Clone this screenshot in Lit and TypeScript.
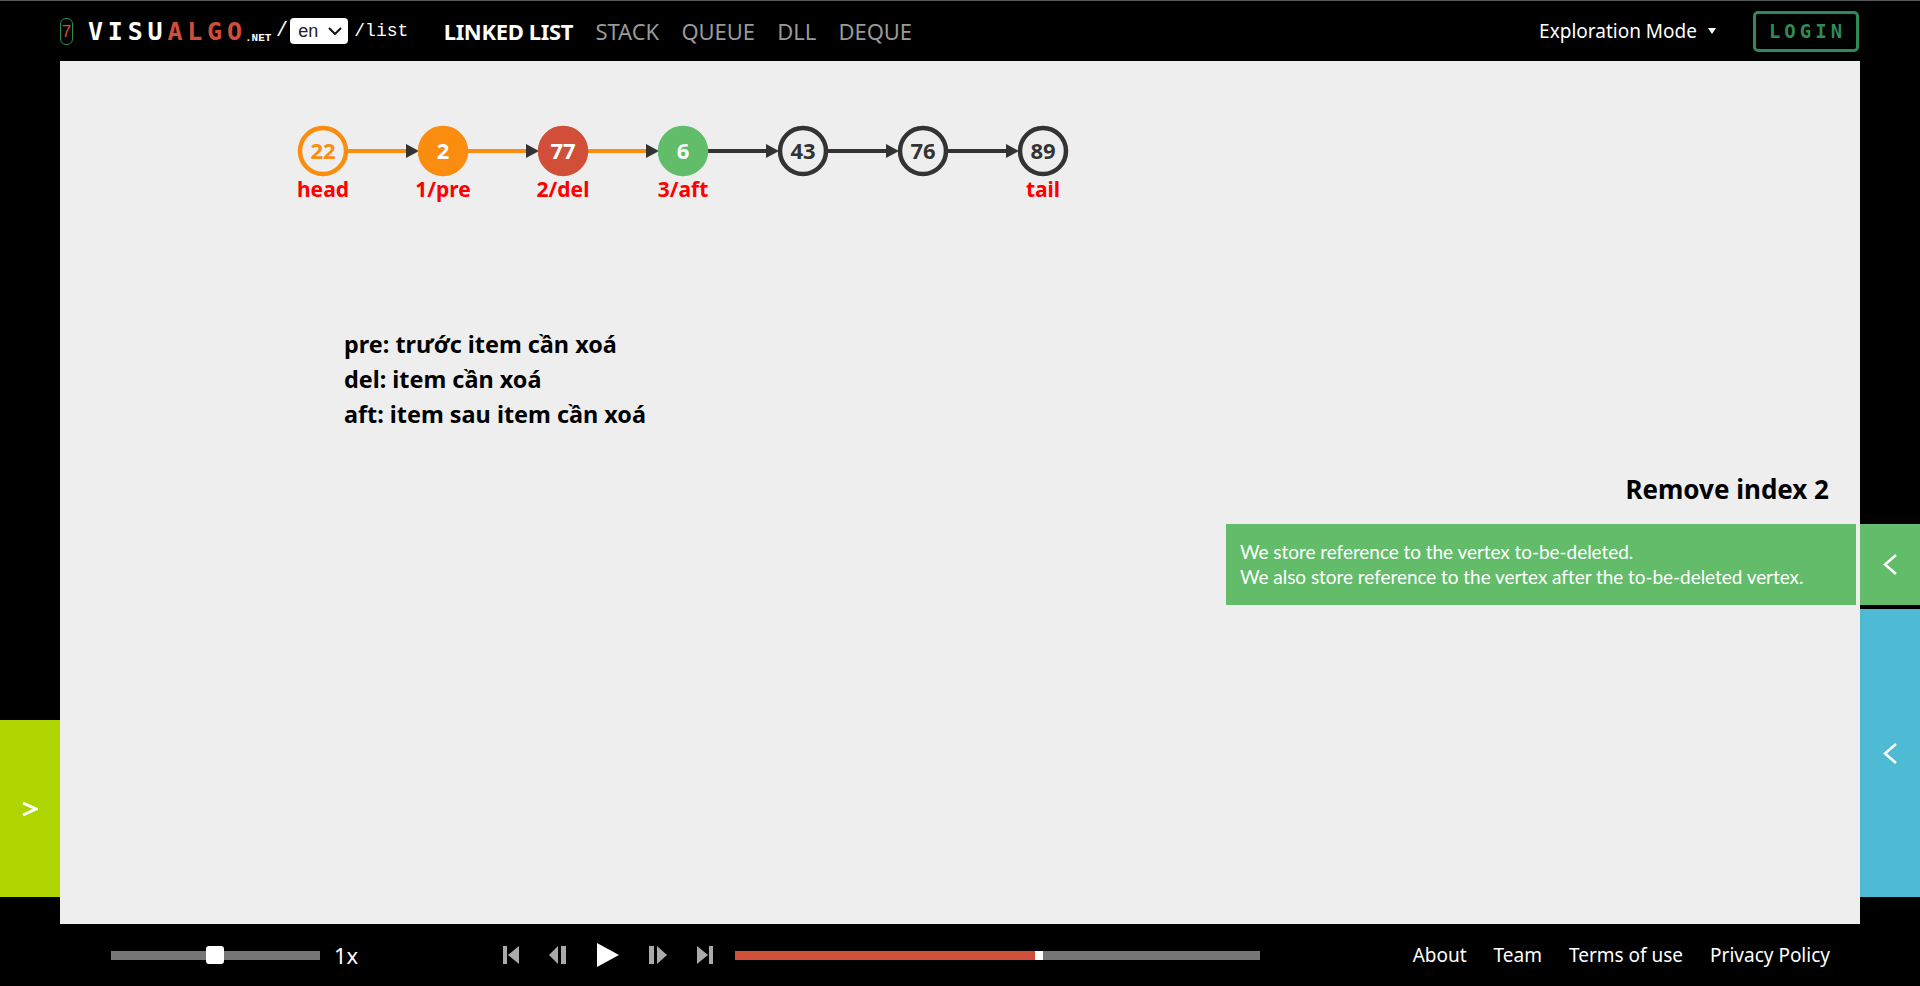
import { LitElement, html, css, svg } from "lit";
import { customElement } from "lit/decorators.js";

const ORANGE = "#fa8c0f";
const DARK = "#333";

type ListNode = { value: number; label?: string; fill?: string; ring?: string; edge?: string };

const NODES: ListNode[] = [
  { value: 22, label: "head", ring: ORANGE, edge: ORANGE },
  { value: 2, label: "1/pre", fill: ORANGE, edge: ORANGE },
  { value: 77, label: "2/del", fill: "#d14f38", edge: ORANGE },
  { value: 6, label: "3/aft", fill: "#62bd6a" },
  { value: 43 },
  { value: 76 },
  { value: 89, label: "tail" },
];

@customElement("list-graph")
export class ListGraph extends LitElement {
  static styles = css`
    :host {
      display: block;
      height: 160px;
    }
    svg {
      display: block;
      font-family: "Noto Sans", sans-serif;
      font-weight: 700;
    }
    .val {
      font-size: 22px;
      text-anchor: middle;
    }
    .lbl {
      font-size: 21px;
      text-anchor: middle;
      fill: #f00;
    }
  `;

  render() {
    const cy = 90;
    const r = 23;
    const step = 120;
    const left = 263;
    return html`
      <svg width="1100" height="160">
        ${NODES.map((n, i) => {
          const x = left + i * step;
          if (i == NODES.length - 1) return null;
          const color = n.edge ?? DARK;
          return svg`
            <line x1=${x + r} y1=${cy} x2=${x + step - 34} y2=${cy} stroke=${color} stroke-width="4"></line>
            <polygon points="${x + step - 37},${cy - 7} ${x + step - 24},${cy} ${x + step - 37},${cy + 7}" fill=${DARK}></polygon>
          `;
        })}
        ${NODES.map((n, i) => {
          const x = left + i * step;
          const stroke = n.fill ?? n.ring ?? DARK;
          const textFill = n.fill ? "#fff" : n.ring ?? DARK;
          return svg`
            <circle cx=${x} cy=${cy} r=${r} fill=${n.fill ?? "#eee"} stroke=${stroke} stroke-width="4.5"></circle>
            <text class="val" x=${x} y=${cy + 8} fill=${textFill}>${n.value}</text>
            ${n.label ? svg`<text class="lbl" x=${x} y=${cy + 46}>${n.label}</text>` : null}
          `;
        })}
      </svg>
    `;
  }
}

@customElement("app-root")
export class AppRoot extends LitElement {
  static styles = css`
    :host {
      display: grid;
      grid-template-rows: 61px 863px 62px;
      height: 986px;
      background: #000;
      color: #fff;
      font-family: "Noto Sans", sans-serif;
      overflow: hidden;
    }

    /* top bar */
    .top {
      display: flex;
      align-items: center;
      border-top: 1px solid #555;
      padding: 0 61px 0 60px;
    }
    .seven {
      width: 11px;
      height: 25px;
      border: 1.5px solid #2e8b57;
      border-radius: 6px;
      color: #d14f38;
      font: 17px/25px "Liberation Sans", sans-serif;
      text-align: center;
      margin-right: 15px;
    }
    .logo {
      font: 700 25px/1 "DejaVu Sans Mono", monospace;
      letter-spacing: 4.8px;
      width: 157px;
    }
    .logo b {
      color: #d14f38;
    }
    .net {
      font: 700 11px/1 "Liberation Mono", monospace;
      align-self: flex-end;
      margin: 0 5px 17px 0;
      width: 26px;
      white-space: nowrap;
    }
    .slash {
      font: 400 20px/1 "Liberation Mono", monospace;
      margin-right: 1px;
    }
    .lang {
      position: relative;
      width: 58px;
      height: 26px;
      margin: 0 6px 0 1.3px;
    }
    select {
      appearance: none;
      display: block;
      width: 100%;
      height: 100%;
      padding: 0 0 0 8px;
      border: 0;
      border-radius: 4px;
      background: #fff;
      color: #222;
      font: 18px "Liberation Sans", sans-serif;
    }
    .lang svg {
      position: absolute;
      right: 6px;
      top: 9px;
      pointer-events: none;
    }
    .path {
      font: 18px/1 "Liberation Mono", monospace;
      margin-right: 35.4px;
    }
    nav {
      display: flex;
      gap: 22.5px;
      font-size: 22px;
      color: #999;
      letter-spacing: -0.1px;
    }
    nav .on {
      color: #fff;
      font-weight: 700;
      letter-spacing: -0.35px;
    }
    .mode {
      margin-left: auto;
      display: flex;
      align-items: center;
      gap: 11px;
      font-size: 19px;
      margin-right: 37px;
    }
    .mode i {
      width: 0;
      height: 0;
      border: 4px solid transparent;
      border-top: 6px solid #fff;
      border-bottom: 0;
    }
    .login {
      box-sizing: border-box;
      width: 106px;
      height: 41px;
      padding-left: 3px;
      border: 3px solid #2e8b57;
      border-radius: 5px;
      color: #2e8b57;
      font: 700 19px/35px "DejaVu Sans Mono", monospace;
      letter-spacing: 4px;
      text-align: center;
    }

    /* middle */
    .mid {
      display: grid;
      grid-template-columns: 60px 1fr 60px;
    }
    .tab {
      display: flex;
      align-items: center;
      justify-content: center;
    }
    .col-left {
      padding-top: 659px;
    }
    .col-left .tab {
      height: 177px;
      padding-right: 2px;
      box-sizing: border-box;
      background: #aed500;
    }
    .col-right {
      display: flex;
      flex-direction: column;
      gap: 4px;
      padding-top: 463px;
    }
    .tab.green {
      height: 81px;
      background: #62bc69;
    }
    .tab.blue {
      height: 288px;
      background: #4fbad3;
    }
    main {
      background: #eee;
      color: #000;
      display: flex;
      flex-direction: column;
    }
    .code {
      margin: 106px 0 0 284px;
      font-size: 23.4px;
      line-height: 35px;
      font-weight: 700;
    }
    .title {
      margin: 42px 31px 20px 0;
      text-align: right;
      font-size: 26px;
      line-height: 30px;
      font-weight: 700;
    }
    .status {
      align-self: flex-end;
      box-sizing: border-box;
      width: 630px;
      height: 81px;
      margin-right: 4px;
      padding: 15px 14px;
      background: #62bc69;
      color: #fff;
      font-family: Lato, sans-serif;
      font-size: 19px;
      letter-spacing: -0.05px;
      line-height: 25px;
      white-space: nowrap;
    }

    /* bottom bar */
    .bottom {
      display: flex;
      align-items: center;
      padding: 0 90px 0 111px;
      font-size: 19px;
    }
    .speed {
      position: relative;
      width: 209px;
      height: 9px;
      background: #777;
    }
    .thumb {
      position: absolute;
      left: 95px;
      top: -5px;
      width: 18px;
      height: 18px;
      border-radius: 3px;
      background: #fff;
    }
    .rate {
      margin: 0 145px 0 14px;
      width: 24px;
      font-size: 22px;
    }
    .controls {
      display: flex;
      align-items: center;
      gap: 30px;
      margin-right: 22px;
    }
    .controls svg {
      display: block;
    }
    .progress {
      display: flex;
      width: 525px;
      height: 9px;
      background: #777;
    }
    .done {
      width: 300px;
      background: #d14f38;
    }
    .now {
      width: 8px;
      background: #fff;
    }
    .links {
      margin-left: auto;
      display: flex;
      gap: 27px;
    }
  `;

  chevron(points: string, w: number, h: number, sw: number) {
    return html`<svg width=${w} height=${h} viewBox="0 0 ${w} ${h}">
      <polyline points=${points} fill="none" stroke="#fff" stroke-width=${sw}></polyline>
    </svg>`;
  }

  render() {
    const left = "13,1 2,10.5 13,20";
    return html`
      <header class="top">
        <div class="seven">7</div>
        <div class="logo">VISU<b>ALGO</b></div>
        <div class="net">.NET</div>
        <div class="slash">/</div>
        <div class="lang">
          <select><option>en</option></select>
          <svg width="14" height="8" viewBox="0 0 14 8">
            <polyline points="1,1 7,7 13,1" fill="none" stroke="#111" stroke-width="2"></polyline>
          </svg>
        </div>
        <div class="path">/list</div>
        <nav>
          <span class="on">LINKED LIST</span>
          <span>STACK</span>
          <span>QUEUE</span>
          <span>DLL</span>
          <span>DEQUE</span>
        </nav>
        <div class="mode">Exploration Mode <i></i></div>
        <div class="login">LOGIN</div>
      </header>

      <div class="mid">
        <div class="col-left">
          <div class="tab">${this.chevron("2,2 15,8 2,14", 17, 16, 3)}</div>
        </div>
        <main>
          <list-graph></list-graph>
          <div class="code">
            <div>pre: trước item cần xoá</div>
            <div>del: item cần xoá</div>
            <div>aft: item sau item cần xoá</div>
          </div>
          <div class="title">Remove index 2</div>
          <div class="status">
            We store reference to the vertex to-be-deleted.<br />
            We also store reference to the vertex after the to-be-deleted vertex.
          </div>
        </main>
        <div class="col-right">
          <div class="tab green">${this.chevron(left, 15, 21, 2.5)}</div>
          <div class="tab blue">${this.chevron(left, 15, 21, 2.5)}</div>
        </div>
      </div>

      <footer class="bottom">
        <div class="speed"><div class="thumb"></div></div>
        <div class="rate">1x</div>
        <div class="controls">
          <svg width="16" height="18" fill="#aaa"><rect width="4" height="18"></rect><polygon points="16,0 16,18 5,9"></polygon></svg>
          <svg width="18" height="18" fill="#aaa"><polygon points="9,0 9,18 0,9"></polygon><rect x="12" width="5" height="18"></rect></svg>
          <svg width="22" height="24" fill="#fff"><polygon points="0,0 22,12 0,24"></polygon></svg>
          <svg width="18" height="18" fill="#aaa"><rect width="5" height="18"></rect><polygon points="8,0 18,9 8,18"></polygon></svg>
          <svg width="16" height="18" fill="#aaa"><polygon points="0,0 11,9 0,18"></polygon><rect x="12" width="4" height="18"></rect></svg>
        </div>
        <div class="progress">
          <div class="done"></div>
          <div class="now"></div>
        </div>
        <div class="links">
          <span>About</span>
          <span>Team</span>
          <span>Terms of use</span>
          <span>Privacy Policy</span>
        </div>
      </footer>
    `;
  }
}
